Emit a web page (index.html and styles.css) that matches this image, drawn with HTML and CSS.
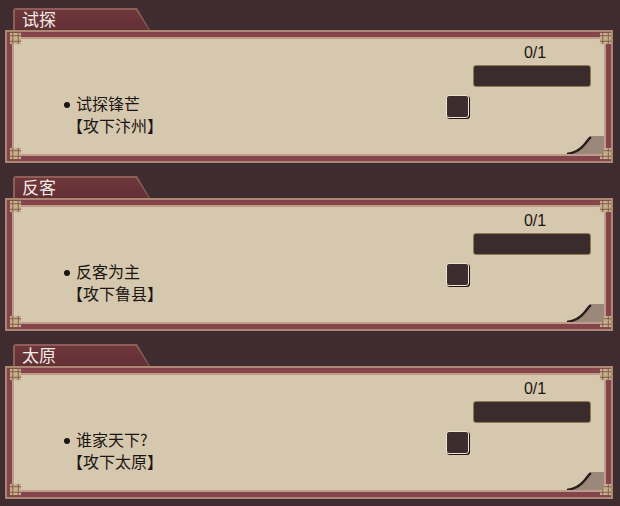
FILE: index.html
```html
<!DOCTYPE html>
<html>
<head>
  <meta charset="utf-8">
  <link rel="stylesheet" href="styles.css">
</head>
<body>
  <div class="quest">
    <div class="tab"><span>试探</span></div>
    <div class="panel">
      <svg class="knot tl" viewBox="0 0 14 14"><rect x="1" y="1" width="12" height="12" fill="#c9ae8c"/><path d="M4 1v12M10 1v12M1 4h12M1 10h12" stroke="#7a5a48" stroke-width="1" fill="none"/></svg>
      <svg class="knot tr" viewBox="0 0 14 14"><rect x="1" y="1" width="12" height="12" fill="#c9ae8c"/><path d="M4 1v12M10 1v12M1 4h12M1 10h12" stroke="#7a5a48" stroke-width="1" fill="none"/></svg>
      <svg class="knot bl" viewBox="0 0 14 14"><rect x="1" y="1" width="12" height="12" fill="#c9ae8c"/><path d="M4 1v12M10 1v12M1 4h12M1 10h12" stroke="#7a5a48" stroke-width="1" fill="none"/></svg>
      <svg class="knot br" viewBox="0 0 14 14"><rect x="1" y="1" width="12" height="12" fill="#c9ae8c"/><path d="M4 1v12M10 1v12M1 4h12M1 10h12" stroke="#7a5a48" stroke-width="1" fill="none"/></svg>
      <svg class="curl" viewBox="0 0 40 19"><path d="M40 1 L30 1 C26 1 25 3 23 6 C19 12 12 17 3 19 L40 19 Z" fill="#9c887a"/><path d="M27 2 C24 4 23 7 20 10 C16 15 10 18 3 19" stroke="#2a1d1c" stroke-width="2.4" fill="none"/></svg>
      <div class="goal">
        <div class="line"><i class="dot"></i>试探锋芒</div>
        <div class="line sub">【攻下汴州】</div>
      </div>
      <div class="check"></div>
      <div class="progress">
        <div class="count">0/1</div>
        <div class="bar"></div>
      </div>
    </div>
  </div>

  <div class="quest">
    <div class="tab"><span>反客</span></div>
    <div class="panel">
      <svg class="knot tl" viewBox="0 0 14 14"><rect x="1" y="1" width="12" height="12" fill="#c9ae8c"/><path d="M4 1v12M10 1v12M1 4h12M1 10h12" stroke="#7a5a48" stroke-width="1" fill="none"/></svg>
      <svg class="knot tr" viewBox="0 0 14 14"><rect x="1" y="1" width="12" height="12" fill="#c9ae8c"/><path d="M4 1v12M10 1v12M1 4h12M1 10h12" stroke="#7a5a48" stroke-width="1" fill="none"/></svg>
      <svg class="knot bl" viewBox="0 0 14 14"><rect x="1" y="1" width="12" height="12" fill="#c9ae8c"/><path d="M4 1v12M10 1v12M1 4h12M1 10h12" stroke="#7a5a48" stroke-width="1" fill="none"/></svg>
      <svg class="knot br" viewBox="0 0 14 14"><rect x="1" y="1" width="12" height="12" fill="#c9ae8c"/><path d="M4 1v12M10 1v12M1 4h12M1 10h12" stroke="#7a5a48" stroke-width="1" fill="none"/></svg>
      <svg class="curl" viewBox="0 0 40 19"><path d="M40 1 L30 1 C26 1 25 3 23 6 C19 12 12 17 3 19 L40 19 Z" fill="#9c887a"/><path d="M27 2 C24 4 23 7 20 10 C16 15 10 18 3 19" stroke="#2a1d1c" stroke-width="2.4" fill="none"/></svg>
      <div class="goal">
        <div class="line"><i class="dot"></i>反客为主</div>
        <div class="line sub">【攻下鲁县】</div>
      </div>
      <div class="check"></div>
      <div class="progress">
        <div class="count">0/1</div>
        <div class="bar"></div>
      </div>
    </div>
  </div>

  <div class="quest">
    <div class="tab"><span>太原</span></div>
    <div class="panel">
      <svg class="knot tl" viewBox="0 0 14 14"><rect x="1" y="1" width="12" height="12" fill="#c9ae8c"/><path d="M4 1v12M10 1v12M1 4h12M1 10h12" stroke="#7a5a48" stroke-width="1" fill="none"/></svg>
      <svg class="knot tr" viewBox="0 0 14 14"><rect x="1" y="1" width="12" height="12" fill="#c9ae8c"/><path d="M4 1v12M10 1v12M1 4h12M1 10h12" stroke="#7a5a48" stroke-width="1" fill="none"/></svg>
      <svg class="knot bl" viewBox="0 0 14 14"><rect x="1" y="1" width="12" height="12" fill="#c9ae8c"/><path d="M4 1v12M10 1v12M1 4h12M1 10h12" stroke="#7a5a48" stroke-width="1" fill="none"/></svg>
      <svg class="knot br" viewBox="0 0 14 14"><rect x="1" y="1" width="12" height="12" fill="#c9ae8c"/><path d="M4 1v12M10 1v12M1 4h12M1 10h12" stroke="#7a5a48" stroke-width="1" fill="none"/></svg>
      <svg class="curl" viewBox="0 0 40 19"><path d="M40 1 L30 1 C26 1 25 3 23 6 C19 12 12 17 3 19 L40 19 Z" fill="#9c887a"/><path d="M27 2 C24 4 23 7 20 10 C16 15 10 18 3 19" stroke="#2a1d1c" stroke-width="2.4" fill="none"/></svg>
      <div class="goal">
        <div class="line"><i class="dot"></i>谁家天下?</div>
        <div class="line sub">【攻下太原】</div>
      </div>
      <div class="check"></div>
      <div class="progress">
        <div class="count">0/1</div>
        <div class="bar"></div>
      </div>
    </div>
  </div>
</body>
</html>
```

FILE: styles.css
```css
body {
  margin: 0;
  background: #3e2c31;
  font-family: "Liberation Sans", "Noto Sans CJK SC", sans-serif;
}
.quest {
  height: 168px;
  padding-top: 8px;
  box-sizing: border-box;
}
/* slanted title tab */
.tab {
  position: relative;
  width: 137px;
  height: 22px;
  margin-left: 13px;
}
.tab::before,
.tab::after {
  content: "";
  position: absolute;
  clip-path: polygon(0 0, calc(100% - 13px) 0, 100% 100%, 0 100%);
}
.tab::before {
  inset: 0;
  background: #8f5d58;
  border-radius: 3px 0 0 0;
}
.tab::after {
  inset: 2px 1px 0 2px;
  background: linear-gradient(#6f373b, #623036);
}
.tab span {
  position: relative;
  z-index: 1;
  display: block;
  padding-left: 9px;
  line-height: 22px;
  font-size: 17px;
  color: #f2ebe3;
  font-family: "Noto Sans CJK SC", sans-serif;
}
.panel {
  position: relative;
  display: flex;
  align-items: flex-start;
  height: 133px;
  margin: 0 7px 0 5px;
  box-sizing: border-box;
  border: 2px solid #ab8774;
  background: #d6c8ae;
  box-shadow: inset 0 0 0 5px #834549, inset 0 0 0 7px #bf9c8a;
}
.knot {
  position: absolute;
  width: 13px;
  height: 13px;
}
.knot.tl { left: 2px; top: 0; }
.knot.tr { right: -1px; top: 0; }
.knot.bl { left: 2px; bottom: 1px; }
.knot.br { right: -1px; bottom: 1px; }
.curl {
  position: absolute;
  right: 7px;
  bottom: 7px;
  width: 40px;
  height: 19px;
}
.goal {
  flex: 1;
  padding: 60px 0 0 55px;
  font-size: 16px;
  line-height: 22px;
  color: #1b1614;
  font-family: "Noto Sans CJK SC", sans-serif;
}
.sub {
  padding-left: 5px;
}
.dot {
  display: inline-block;
  width: 6px;
  height: 6px;
  margin: 0 6px 2px 2px;
  border-radius: 50%;
  background: #1b1614;
  vertical-align: middle;
}
.check {
  width: 21px;
  height: 21px;
  margin: 63px 4px 0 0;
  border: 1px solid #efe5d3;
  border-radius: 3px;
  background: #3d2d30;
  box-shadow: 1px 1px 0 #1e1515;
}
.progress {
  width: 118px;
  margin: 10px 20px 0 0;
}
.count {
  padding-left: 6px;
  line-height: 22px;
  font-size: 16px;
  text-align: center;
  color: #1b1614;
}
.bar {
  height: 20px;
  margin-top: 1px;
  border: 1px solid #8f7b4f;
  border-radius: 3px;
  background: #3a2b2c;
}
```
